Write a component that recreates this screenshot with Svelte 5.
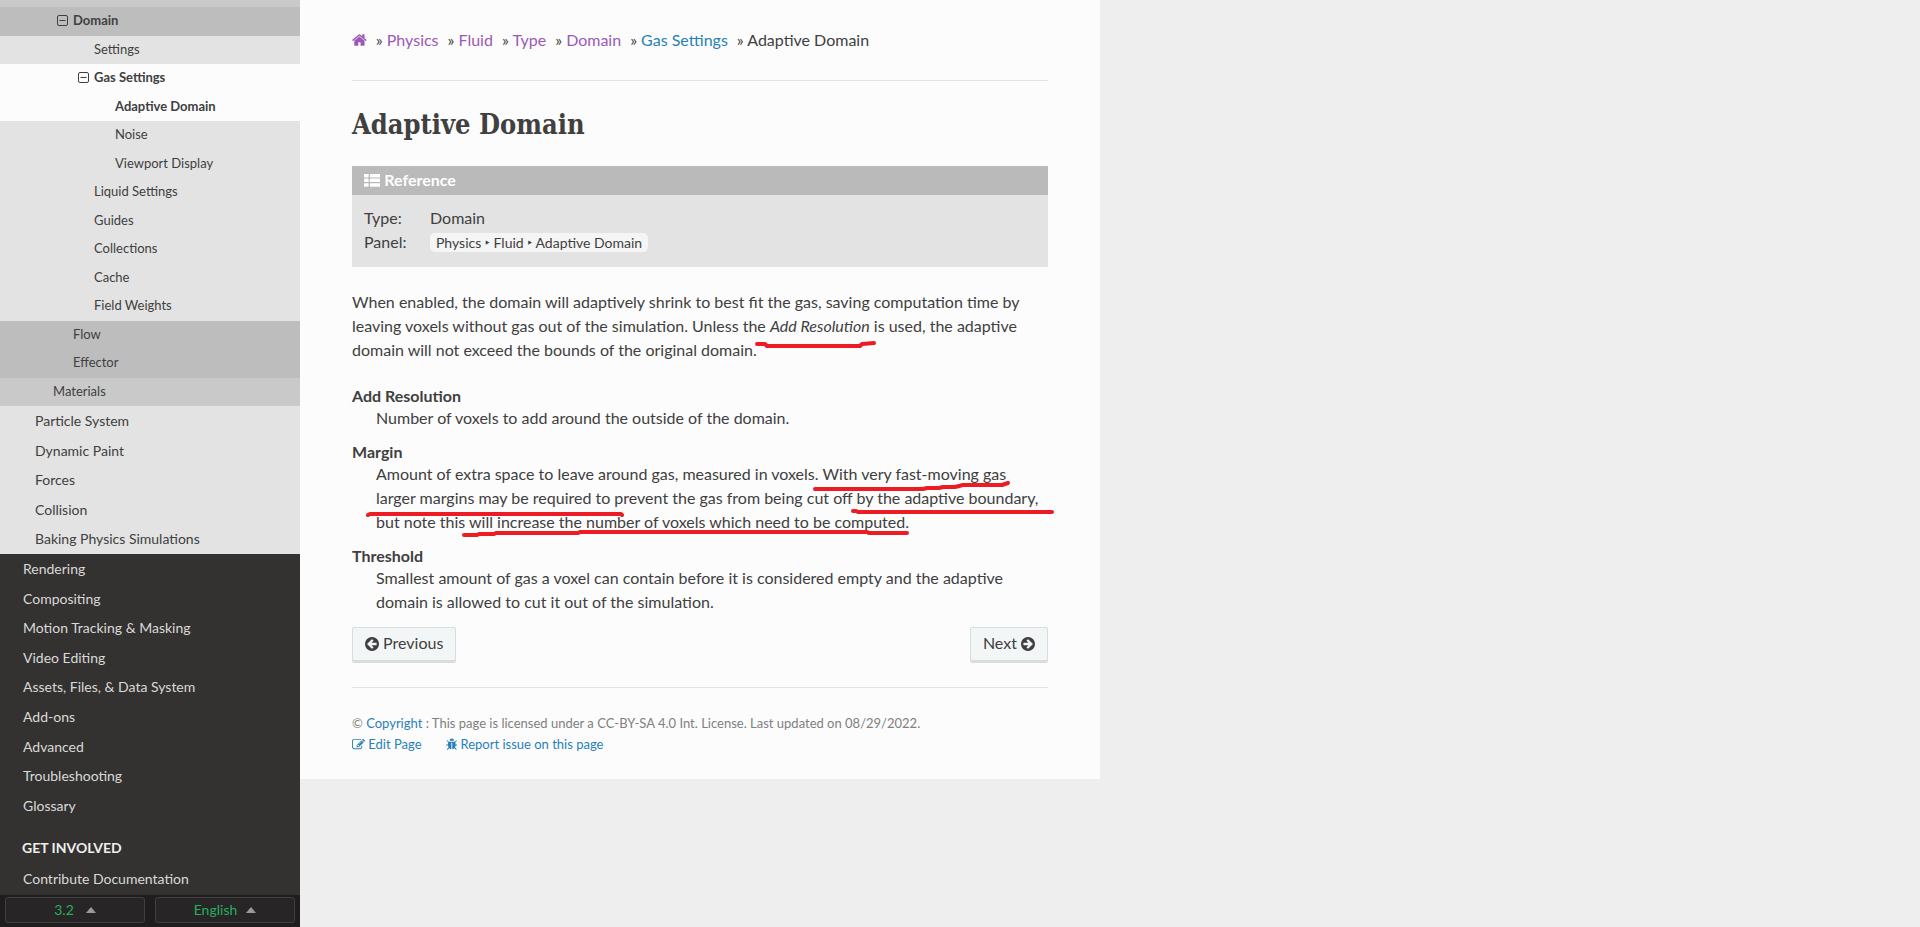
<script>
  const fluidPages = [
    { label: 'Domain', level: 4, tone: 'deep', current: true, open: true },
    { label: 'Settings', level: 5, tone: 'light' },
    { label: 'Gas Settings', level: 5, tone: 'white', current: true, open: true },
    { label: 'Adaptive Domain', level: 6, tone: 'white', current: true },
    { label: 'Noise', level: 6, tone: 'light' },
    { label: 'Viewport Display', level: 6, tone: 'light' },
    { label: 'Liquid Settings', level: 5, tone: 'light' },
    { label: 'Guides', level: 5, tone: 'light' },
    { label: 'Collections', level: 5, tone: 'light' },
    { label: 'Cache', level: 5, tone: 'light' },
    { label: 'Field Weights', level: 5, tone: 'light' },
    { label: 'Flow', level: 4, tone: 'deep' },
    { label: 'Effector', level: 4, tone: 'deep' },
    { label: 'Materials', level: 3, tone: 'mid' }
  ];
  const physicsPages = ['Particle System', 'Dynamic Paint', 'Forces', 'Collision', 'Baking Physics Simulations'];
  const sections = [
    'Rendering', 'Compositing', 'Motion Tracking & Masking', 'Video Editing',
    'Assets, Files, & Data System', 'Add-ons', 'Advanced', 'Troubleshooting', 'Glossary'
  ];
  const crumbs = [
    { label: 'Physics', visited: true },
    { label: 'Fluid', visited: true },
    { label: 'Type', visited: true },
    { label: 'Domain', visited: true },
    { label: 'Gas Settings', visited: false }
  ];
  const arrow = 'M1408 960v-128q0-26-19-45t-45-19h-502l189-189q19-19 19-45t-19-45l-91-91q-18-18-45-18t-45 18l-362 362-91 91q-18 18-18 45t18 45l91 91 362 362q18 18 45 18t45-18l91-91q18-18 18-45t-18-45l-189-189h502q26 0 45-19t19-45zm256-64q0 209-103 385.5t-279.5 279.5-385.5 103-385.5-103-279.5-279.5-103-385.5 103-385.5 279.5-279.5 385.5-103 385.5 103 279.5 279.5 103 385.5z';
</script>

<div class="shell">
  <nav class="side" aria-label="Manual contents">
    <div class="tree">
      <ul class="fluid">
        {#each fluidPages as page}
          <li class="{page.tone} level{page.level}">
            <a href="#top" class:current={page.current}>
              {#if page.open}
                <svg class="toggle" viewBox="0 0 11 11" aria-hidden="true">
                  <rect x="0.5" y="0.5" width="10" height="10" rx="1.5" fill="none" stroke="currentColor" />
                  <path d="M2.5 5.5h6" stroke="currentColor" />
                </svg>
              {/if}
              {page.label}
            </a>
          </li>
        {/each}
      </ul>
      <ul class="physics">
        {#each physicsPages as label}
          <li><a href="#top">{label}</a></li>
        {/each}
      </ul>
      <ul class="sections">
        {#each sections as label}
          <li><a href="#top">{label}</a></li>
        {/each}
      </ul>
      <p class="caption">GET INVOLVED</p>
      <ul class="sections">
        <li><a href="#top">Contribute Documentation</a></li>
      </ul>
    </div>
    <div class="switches">
      <button type="button">3.2 <span class="caret"></span></button>
      <button type="button">English <span class="caret"></span></button>
    </div>
  </nav>

  <main id="top">
    <nav class="crumbs" aria-label="Breadcrumb">
      <a href="#top" class="visited" aria-label="Home">
        <svg class="icon" viewBox="64 0 1664 1792" aria-hidden="true"><path d="M1472 992v480q0 26-19 45t-45 19h-384v-384h-256v384h-384q-26 0-45-19t-19-45v-480q0-1 .5-3t.5-3l575-474 575 474q1 2 1 6zm223-69l-62 74q-8 9-21 11h-3q-13 0-21-7l-692-577-692 577q-12 8-24 7-13-2-21-11l-62-74q-8-10-7-23.5t11-21.5l719-599q32-26 76-26t76 26l244 204v-195q0-14 9-23t23-9h192q14 0 23 9t9 23v408l219 182q10 8 11 21.5t-7 23.5z" /></svg>
      </a>
      {#each crumbs as crumb}
        <span>» <a href="#top" class:visited={crumb.visited}>{crumb.label}</a></span>
      {/each}
      <span>» Adaptive Domain</span>
    </nav>
    <hr />

    <h1>Adaptive Domain</h1>

    <section class="reference">
      <p class="title">
        <svg class="icon" viewBox="0 128 1792 1536" aria-hidden="true">
          {#each [224, 736, 1248] as y}
            <rect x="0" {y} width="512" height="384" rx="96" />
            <rect x="640" {y} width="1152" height="384" rx="96" />
          {/each}
        </svg>
        Reference
      </p>
      <dl>
        <dt>Type:</dt>
        <dd>Domain</dd>
        <dt>Panel:</dt>
        <dd><span class="path">Physics ‣ Fluid ‣ Adaptive Domain</span></dd>
      </dl>
    </section>

    <p class="intro">
      When enabled, the domain will adaptively shrink to best fit the gas, saving computation time by
      leaving voxels without gas out of the simulation. Unless the <em>Add Resolution</em> is used, the
      adaptive domain will not exceed the bounds of the original domain.
    </p>

    <dl class="options">
      <dt>Add Resolution</dt>
      <dd>Number of voxels to add around the outside of the domain.</dd>
      <dt>Margin</dt>
      <dd>
        Amount of extra space to leave around gas, measured in voxels. With very fast-moving gas larger
        margins may be required to prevent the gas from being cut off by the adaptive boundary, but note
        this will increase the number of voxels which need to be computed.
      </dd>
      <dt>Threshold</dt>
      <dd>
        Smallest amount of gas a voxel can contain before it is considered empty and the adaptive domain
        is allowed to cut it out of the simulation.
      </dd>
    </dl>

    <div class="pager">
      <a href="#top"><svg class="icon" viewBox="128 128 1536 1536" aria-hidden="true"><path d={arrow} /></svg> Previous</a>
      <a href="#top">Next <svg class="icon flip" viewBox="128 128 1536 1536" aria-hidden="true"><path d={arrow} /></svg></a>
    </div>
    <hr />

    <footer>
      <p>© <a href="#top">Copyright</a> : This page is licensed under a CC-BY-SA 4.0 Int. License. Last updated on 08/29/2022.</p>
      <p class="actions">
        <a href="#top"><svg class="icon" viewBox="0 0 1792 1792" aria-hidden="true"><path d="M888 1184l116-116-152-152-116 116v56h96v96h56zm440-720q-16-16-33 1l-350 350q-17 17-1 33t33-1l350-350q17-17 1-33zm80 594v190q0 119-84.5 203.5t-203.5 84.5h-832q-119 0-203.5-84.5t-84.5-203.5v-832q0-119 84.5-203.5t203.5-84.5h832q63 0 117 25 15 7 18 23 3 17-9 29l-49 49q-14 14-32 8-23-6-45-6h-832q-66 0-113 47t-47 113v832q0 66 47 113t113 47h832q66 0 113-47t47-113v-126q0-13 9-22l64-64q15-15 35-7t20 29zm-96-738l288 288-672 672h-288v-288zm444 132l-92 92-288-288 92-92q28-28 68-28t68 28l152 152q28 28 28 68t-28 68z" /></svg> Edit Page</a>
        <a href="#top"><svg class="icon" viewBox="96 0 1600 1792" aria-hidden="true"><path d="M1696 960q0 26-19 45t-45 19h-224q0 171-67 290l208 209q19 19 19 45t-19 45q-18 19-45 19t-45-19l-198-197q-5 5-15 13t-42 28.5-65 36.5-82 29-97 13v-896h-128v896q-51 0-101.5-13.5t-87-33-66-39-43.5-32.5l-15-14-183 207q-20 21-48 21-24 0-43-16-19-18-20.5-44.5t15.5-46.5l202-227q-58-114-58-274h-224q-26 0-45-19t-19-45 19-45 45-19h224v-294l-173-173q-19-19-19-45t19-45 45-19 45 19l173 173h844l173-173q19-19 45-19t45 19 19 45-19 45l-173 173v294h224q26 0 45 19t19 45zm-480-576h-640q0-133 93.5-226.5t226.5-93.5 226.5 93.5 93.5 226.5z" /></svg> Report issue on this page</a>
      </p>
    </footer>

    <!-- Hand-drawn red underlines lying over the text -->
    <svg class="marks" viewBox="300 0 800 779" width="800" height="779" aria-hidden="true">
      <path d="M757 344h8l2 2h93l2-2 12-1" />
      <path d="M815 489h108l4-1h12l4-1h12l8-2h39l6-2" />
      <path d="M853 511h3l2 1h194" />
      <path d="M368 515l2-1h251l1 1" />
      <path d="M464 535h13l2-1h15l2-1h82l2-1h287l2 1h38" />
    </svg>
  </main>
</div>

<style>
  :global(body) {
    margin: 0;
    background: #eee;
    color: #404040;
    font: 16px/24px Lato, "Noto Sans", sans-serif;
  }

  .shell {
    display: flex;
    align-items: flex-start;
    min-height: 100vh;
  }

  ul, dl, dd, p, h1 {
    margin: 0;
    padding: 0;
  }

  ul {
    list-style: none;
  }

  a {
    color: #2980b9;
    text-decoration: none;
  }

  .icon {
    height: 16px;
    fill: currentColor;
    vertical-align: -2px;
  }

  .side {
    position: sticky;
    top: 0;
    display: flex;
    flex: 0 0 300px;
    flex-direction: column;
    height: 100vh;
    background: #333230;
    font-size: 14px;
  }

  .tree {
    flex: 1;
    min-height: 0;
    overflow: hidden;
  }

  .tree li a {
    display: flex;
    box-sizing: border-box;
    align-items: center;
    height: 30px;
    color: #404040;
  }

  .fluid {
    padding-top: 7px;
    background: #c9c9c9;
    font-size: 13px;
  }

  .tree .fluid a {
    height: 29px;
    padding-bottom: 3px;
  }

  .tree .fluid li:nth-child(even) a {
    height: 28px;
  }

  .tree .physics li:nth-child(5n + 2) a,
  .tree .physics li:nth-child(5n + 4) a,
  .tree .sections li:nth-child(5n + 2) a,
  .tree .sections li:nth-child(5n + 4) a {
    height: 29px;
  }

  .light { background: #e3e3e3; }
  .mid { background: #c9c9c9; }
  .deep { background: #bdbdbd; }
  .white { background: #fcfcfc; }

  .level3 { padding-left: 53px; }
  .level4 { padding-left: 73px; }
  .level5 { padding-left: 94px; }
  .level6 { padding-left: 115px; }

  .current {
    font-weight: 700;
  }

  .toggle {
    width: 11px;
    height: 11px;
    margin: 0 5px 0 -16px;
  }

  .physics {
    background: #e3e3e3;
  }

  .physics li {
    padding-left: 35px;
  }

  .sections li {
    padding-left: 23px;
  }

  .tree .sections a {
    color: #d9d9d9;
  }

  .caption {
    margin-top: 12px;
    padding-left: 22px;
    color: #eee;
    font-weight: 700;
    line-height: 32px;
  }

  .switches {
    display: grid;
    grid-template-columns: 1fr 1fr;
    gap: 10px;
    padding: 2px 5px 4px;
    background: #1f1d1d;
  }

  .switches button {
    display: flex;
    align-items: center;
    justify-content: center;
    gap: 12px;
    height: 26px;
    padding: 0;
    border: 1px solid #404040;
    border-radius: 3px;
    background: #272525;
    color: #27ae60;
    font: inherit;
  }

  .switches button + button {
    gap: 9px;
  }

  .caret {
    border: 5px solid transparent;
    border-top-width: 0;
    border-bottom: 6px solid #999;
  }

  main {
    position: relative;
    box-sizing: border-box;
    flex: 0 1 800px;
    min-width: 0;
    padding: 28px 52px 24px;
    background: #fcfcfc;
  }

  .crumbs {
    display: flex;
    flex-wrap: wrap;
    gap: 9px;
  }

  .visited {
    color: #9b59b6;
  }

  hr {
    height: 0;
    margin: 24px 0;
    border: 0;
    border-top: 1px solid #e1e4e5;
  }

  .crumbs + hr {
    margin-top: 28px;
  }

  .pager + hr {
    margin-bottom: 25px;
  }

  h1 {
    margin-bottom: 22px;
    font: 700 27px/39px "DejaVu Serif Condensed", "DejaVu Serif", serif;
    font-stretch: condensed;
  }

  .reference {
    margin-bottom: 23px;
    background: #e3e3e3;
  }

  .title {
    padding: 2px 12px 3px;
    background: #bababa;
    color: #fff;
    font-weight: 700;
  }

  .title .icon {
    height: 14px;
    vertical-align: -1px;
  }

  .reference dl {
    display: grid;
    grid-template-columns: 66px 1fr;
    padding: 11px 12px 12px;
  }

  .path {
    padding: 1px 6px;
    border-radius: 5px;
    background: #f5f5f5;
    font-size: 14px;
  }

  .intro {
    margin-bottom: 24px;
  }

  .options dt {
    font-weight: 700;
    line-height: 20px;
  }

  .options dd {
    margin: 0 0 12px 24px;
  }

  .pager {
    display: flex;
    justify-content: space-between;
    margin-top: 13px;
  }

  .pager a {
    padding: 3px 12px 7px;
    border: 1px solid #dadddd;
    border-radius: 2px;
    background: #f3f6f6;
    box-shadow: inset 0 -2px #dadddd;
    color: #404040;
  }

  .pager .icon {
    height: 14px;
  }

  .flip {
    transform: scaleX(-1);
  }

  footer {
    color: #808080;
    font-size: 13px;
    line-height: 21px;
  }

  footer .icon {
    height: 13px;
  }

  .actions {
    display: flex;
    flex-wrap: wrap;
    gap: 24px;
  }

  .marks {
    position: absolute;
    top: 0;
    left: 0;
    overflow: visible;
    fill: none;
    stroke: #ed1c24;
    stroke-width: 4;
    stroke-linecap: round;
    stroke-linejoin: round;
    pointer-events: none;
  }
</style>
